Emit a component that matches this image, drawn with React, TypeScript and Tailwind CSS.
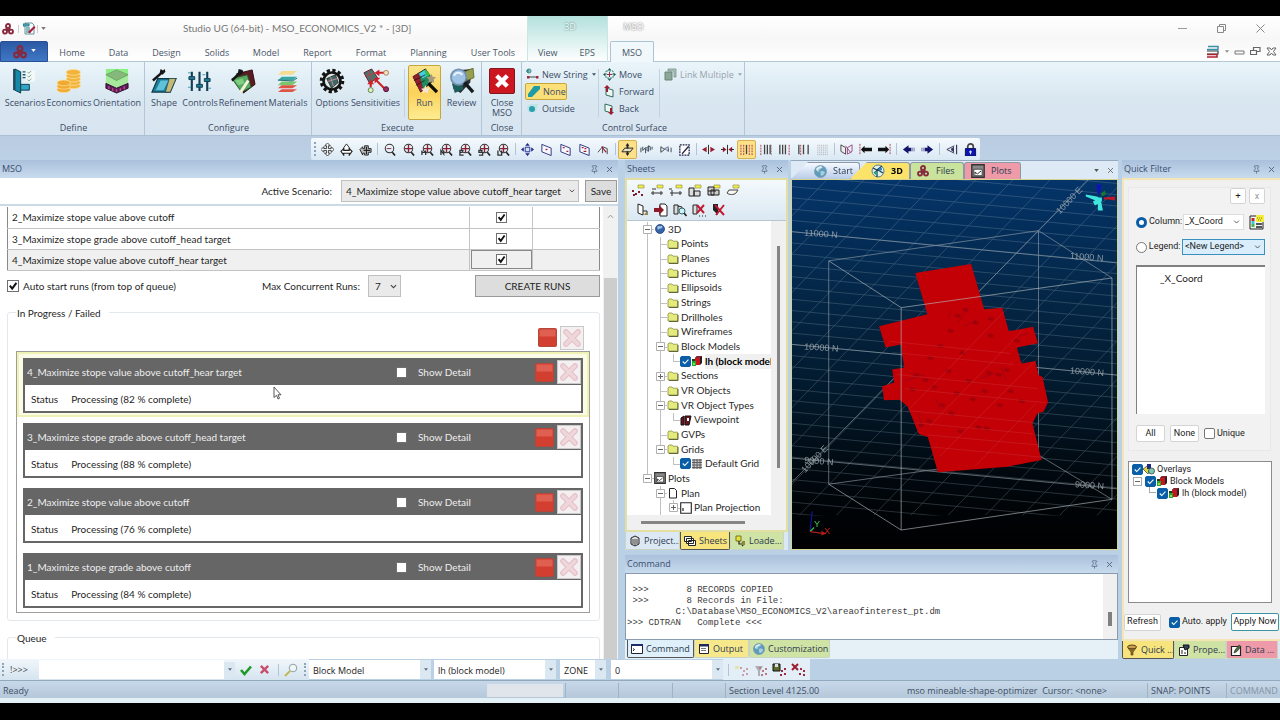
import type { ReactNode } from "react";
import { Pin, X } from "lucide-react";

/* ---------- shared controls ---------- */

function Caret({ className = "" }: { className?: string }) {
  return (
    <svg viewBox="0 0 6 4" className={`h-[3px] w-[5px] shrink-0 ${className}`} aria-hidden="true">
      <path d="M0 0h6L3 4z" fill="currentColor" />
    </svg>
  );
}

function Chevron({ className = "" }: { className?: string }) {
  return (
    <svg viewBox="0 0 8 5" className={`pointer-events-none absolute ${className}`} aria-hidden="true">
      <path d="M1 .8l3 3 3-3" fill="none" stroke="currentColor" strokeWidth="1.2" />
    </svg>
  );
}

function Tick({ label, checked = false, blue = false, className = "" }: { label: string; checked?: boolean; blue?: boolean; className?: string }) {
  return (
    <span className={`relative inline-block shrink-0 ${className}`}>
      <input
        type="checkbox"
        aria-label={label}
        defaultChecked={checked}
        className={
          blue
            ? "peer block h-full w-full appearance-none rounded-[2px] border border-[#777] bg-white checked:border-[#0a5ea8] checked:bg-[#0a5ea8]"
            : "peer block h-full w-full appearance-none border border-[#707070] bg-white"
        }
      />
      <svg viewBox="0 0 12 12" className="pointer-events-none absolute inset-0 hidden h-full w-full peer-checked:block" aria-hidden="true">
        <path d={blue ? "M3 6l2.200 2.200L9.200 4" : "M2.800 5.600l2.400 3L9.400 2.800"} fill="none" stroke={blue ? "#fff" : "#111"} strokeWidth={blue ? "1.2" : "2"} />
      </svg>
    </span>
  );
}

function PanelHead({ title }: { title: string }) {
  return (
    <header className="flex h-[18px] shrink-0 items-center bg-gradient-to-b from-[#aac1dc] to-[#c8dbee] pr-1 pl-[2px] text-[#3b4f6e]">
      <h2 className="flex-1 font-['Open_Sans',sans-serif] text-[9px]">{title}</h2>
      <button aria-label={`Pin ${title}`} className="mr-[6px] opacity-80"><Pin size={9} strokeWidth={2} /></button>
      <button aria-label={`Close ${title}`} className="opacity-80"><X size={9} strokeWidth={2.5} /></button>
    </header>
  );
}

/* ---------- small drawings ---------- */

function AppLogo({ className = "h-3 w-3" }: { className?: string }) {
  return (
    <svg viewBox="0 0 12 12" className={className} fill="none" stroke="#862a3e" strokeWidth="1.9" aria-hidden="true">
      <circle cx="6" cy="3" r="2" />
      <circle cx="3" cy="8.600" r="2" />
      <circle cx="9" cy="8.600" r="2" />
      <path d="M4 4.500L3 7l3 1.500L9 7 8 4.500 6 6z" fill="#862a3e" stroke="none" />
    </svg>
  );
}

function Globe({ className = "h-3 w-3" }: { className?: string }) {
  return (
    <svg viewBox="0 0 12 12" className={className} aria-hidden="true">
      <circle cx="6" cy="6" r="5.600" fill="#5d9cbd" />
      <path d="M2 3c2-2 4-2 6-1-1 2-3 1-3 3s-2 1-3 0zM6 6c2-1 4 0 4 1s-2 3-3 3-1-2-1-4z" fill="#a9cfda" />
      <path d="M2.500 4.500c1-2 3-3 5-2.500" stroke="#e3f2f6" strokeWidth="1.200" fill="none" />
      <circle cx="6" cy="6" r="5.600" fill="none" stroke="#7d96a6" strokeWidth=".6" />
    </svg>
  );
}

function Sphere3D() {
  return (
    <svg viewBox="0 0 14 14" className="h-[14px] w-[14px]" aria-hidden="true">
      <circle cx="7" cy="7" r="6" fill="#dff0ef" stroke="#5a7f8c" />
      <path d="M2 4l4 2 5-4M3 9l4-3 5 3M6 6v7" stroke="#183f55" strokeWidth="1.3" fill="none" />
      <circle cx="5" cy="9" r="1.800" fill="#3aa27a" />
      <circle cx="9.500" cy="5" r="1.600" fill="#2e7fc0" />
    </svg>
  );
}

function PlotIcon({ className = "h-3 w-3" }: { className?: string }) {
  return (
    <svg viewBox="0 0 12 12" className={className} aria-hidden="true">
      <path d="M.7.7h10.600v10.600H.7z" fill="#888" stroke="#333" strokeWidth="1.200" />
      <path d="M2.500 4.500h7v5.500h-7z" fill="#fff" stroke="#222" strokeWidth=".6" />
      <path d="M3.500 9V7l2 1.500L8.600 6" stroke="#222" fill="none" strokeWidth=".8" />
    </svg>
  );
}

function Folder() {
  return (
    <svg viewBox="0 0 12 12" className="h-3 w-3" aria-hidden="true">
      <path d="M1 3l1-1h3l1 1.200h4.600V10H1z" fill="#e4ea7c" stroke="#8a9048" strokeWidth=".8" />
      <path d="M11 4v6.500H2" stroke="#55592c" fill="none" strokeWidth=".9" />
    </svg>
  );
}

function BlockModelIcon() {
  return (
    <svg viewBox="0 0 12 12" className="h-3 w-3 shrink-0" aria-hidden="true">
      <path d="M4 3l2-2h5v7l-2 2H4z" fill="#222" />
      <path d="M4 3h5v7H4z" fill="#c8141e" />
      <path d="M4 3l2-2h5L9 3z" fill="#8c2028" />
      <path d="M1 4h3v2H1z" fill="#14401c" />
      <path d="M1 6h4v5H1z" fill="#26a62e" />
      <path d="M2 8h2v2H2z" fill="#8be04a" />
    </svg>
  );
}

function WorldDot() {
  return (
    <svg viewBox="0 0 12 12" className="h-3 w-3" aria-hidden="true">
      <circle cx="6" cy="6" r="4.500" fill="#3564a8" />
      <path d="M3 4c2-2 3 0 4-1s2 1 1 2-3 0-4 2" fill="#9fc2e8" />
      <circle cx="6" cy="6" r="4.500" fill="none" stroke="#1c3764" strokeWidth=".7" />
    </svg>
  );
}

function StopSquare() {
  return (
    <svg viewBox="0 0 19 19" className="h-[19px] w-[19px]" aria-hidden="true">
      <rect x=".5" y=".5" width="18" height="18" rx="1" fill="#d23f30" stroke="#b4473c" />
      <rect x="1.500" y="1.500" width="16" height="7" fill="#e2685a" opacity=".8" />
    </svg>
  );
}

function FadedX() {
  return (
    <svg viewBox="0 0 20 20" className="h-5 w-5" aria-hidden="true">
      <path d="M4 4l12 12M16 4L4 16" stroke="#e3bdc4" strokeWidth="5.500" strokeLinecap="round" />
      <path d="M4 4l12 12M16 4L4 16" stroke="#efd6da" strokeWidth="3.500" strokeLinecap="round" />
    </svg>
  );
}

/* ---------- title bar and ribbon tabs ---------- */

const mainTabs: [string, string][] = [
  ["Home", "w-12"],
  ["Data", "w-[45px]"],
  ["Design", "w-[51px]"],
  ["Solids", "w-[50px]"],
  ["Model", "w-12"],
  ["Report", "w-[55px]"],
  ["Format", "w-[52px]"],
  ["Planning", "w-[63px]"],
  ["User Tools", "w-[66px]"],
];

function TitleBar() {
  return (
    <header className="flex h-[46px] shrink-0 bg-gradient-to-b from-white via-[#f7f7f7] to-white font-['Open_Sans',sans-serif] text-[9px] text-[#4a5568] shadow-[inset_0_-1px_0_#b4c8d6]">
      <div className="flex w-[527px] shrink-0 flex-col">
        <div className="flex h-[25px] items-center">
          <AppLogo className="ml-[2px] h-3 w-3" />
          <span className="mx-1 h-2 w-px bg-[#ccc]" />
          <svg viewBox="0 0 13 13" className="h-[13px] w-[13px]" aria-hidden="true">
            <path d="M2 1h7l2 2v9H2z" fill="#f6fbfb" stroke="#3e7c86" strokeWidth=".8" />
            <path d="M0 2h6v2H0zM3 6h4M3 8h4M3 10h5" stroke="#23788a" strokeWidth="1" fill="#5fb6c4" />
            <path d="M5 10l6-6 1.500 1.500-6 6z" fill="#b01c38" />
          </svg>
          <span className="ml-px h-2 w-px bg-[#ccc]" />
          <Caret className="ml-[3px] text-[#777]" />
          <h1 className="flex-1 pl-[137px] font-['Lato',sans-serif] text-[10px] text-[#777]">Studio UG (64-bit) - MSO_ECONOMICS_V2 * - [3D]</h1>
        </div>
        <nav className="flex h-[21px] items-stretch">
          <button aria-label="Application menu" className="flex w-12 items-center justify-center gap-1 rounded-t-[2px] border border-[#2a4f94] bg-gradient-to-b from-[#2c59a4] to-[#3f78c6] text-white">
            <AppLogo className="h-[14px] w-[14px]" />
            <Caret className="mb-[2px]" />
          </button>
          {mainTabs.map(([t, w]) => (
            <button key={t} className={`pt-[2px] ${w}`}>{t}</button>
          ))}
        </nav>
      </div>
      <div className="flex w-[81px] shrink-0 flex-col border-x border-[#c9e6e4] bg-gradient-to-b from-[#b3e0dc] via-[#d9f0ee] to-white shadow-[inset_0_-1px_0_#b4c8d6]">
        <p className="h-[25px] pt-1 pl-[5px] text-center text-[#f2fbfa] [text-shadow:0_0_2px_#3f6663]">3D</p>
        <nav className="flex h-[21px]">
          <button className="flex-1 pt-[2px]">View</button>
          <button className="flex-1 pt-[2px]">EPS</button>
        </nav>
      </div>
      <div className="flex w-[46px] shrink-0 flex-col">
        <p className="h-[25px] pt-1 pl-[5px] text-center text-white [text-shadow:0_0_2px_#444]">MSO</p>
        <nav className="flex h-[21px]">
          <button className="ml-[2px] flex-1 rounded-t-[2px] border border-b-0 border-[#a9c4d4] bg-[#f1f8fb] pt-px">MSO</button>
        </nav>
      </div>
      <div className="flex flex-1 flex-col items-end text-[#888]">
        <div className="flex h-[25px] items-center gap-[30px] pr-[15px]">
          <button aria-label="Minimize"><svg viewBox="0 0 9 9" className="h-[9px] w-[9px]"><path d="M0 4.500h9" stroke="#999" /></svg></button>
          <button aria-label="Restore"><svg viewBox="0 0 9 9" className="h-[9px] w-[9px]"><path d="M.5 2.500h6v6h-6zM2.500 2V.5h6v6H7" fill="none" stroke="#888" /></svg></button>
          <button aria-label="Close"><svg viewBox="0 0 9 9" className="h-[9px] w-[9px]"><path d="M.5.5l8 8M8.500.5l-8 8" fill="none" stroke="#888" /></svg></button>
        </div>
        <div className="flex h-5 items-center gap-[5px] pr-[3px]">
          <button aria-label="Style" className="flex items-center gap-[5px]">
            <svg viewBox="0 0 14 13" className="h-[13px] w-[14px]">
              <path d="M2 1.500h10v3H1" fill="none" stroke="#3e8fa6" strokeWidth="1.500" />
              <path d="M1 6h11v3H1" fill="none" stroke="#2e4450" strokeWidth="1.200" />
              <path d="M1 9.500h10v2.500H1" fill="none" stroke="#b02030" strokeWidth="1.500" />
            </svg>
            <Caret className="!w-1" />
          </button>
          <button aria-label="Minimize document"><svg viewBox="0 0 11 11" className="h-[11px] w-[11px]"><path d="M1 5h9v3H1z" fill="none" stroke="#777" /></svg></button>
          <button aria-label="Restore document"><svg viewBox="0 0 11 11" className="h-[11px] w-[11px]"><path d="M.5 4.500h6v4h-6zM3.500 4V1.500h6.500v4H7" fill="none" stroke="#666" strokeWidth="1.200" /></svg></button>
          <button aria-label="Close document"><svg viewBox="0 0 11 11" className="h-[11px] w-[11px]"><path d="M1 2h3l1.500 2L7 2h3L7.500 5.500 10 9H7L5.500 7 4 9H1l2.500-3.500z" fill="none" stroke="#666" /></svg></button>
        </div>
      </div>
    </header>
  );
}

/* ---------- ribbon ---------- */

const ScenariosIcon = (
  <>
    <path d="M14 2h10v12H14z" fill="#f4f8f8" />
    <path d="M11 4h3M11 7h3M11 10h3" stroke="#1d5878" strokeWidth="1.500" />
    <path d="M16 4l1.500 1.500L20 3M16 8l1.500 1.500L20 7M16 12l1.500 1.500L20 11" stroke="#6fae8c" fill="none" />
    <path d="M3 1l6 3v22l-6-3z" fill="#1789a8" stroke="#0d3c50" />
    <path d="M9 17h9v6H9z" fill="#31a5c6" stroke="#0d3c50" />
    <path d="M2 1v22" stroke="#0b2c3c" strokeWidth="1.500" />
  </>
);
const EconomicsIcon = (
  <>
    {[0, 3.5, 7, 10.5, 14].map((d) => <ellipse key={d} cx="18" cy={18.5 - d} rx="7.500" ry="3" fill="#f3b43c" stroke="#fbdf9a" strokeWidth=".8" />)}
    {[0, 3.5, 7].map((d) => <ellipse key={d} cx="8" cy={22.5 - d} rx="7" ry="3" fill="#f0aa30" stroke="#fbdf9a" strokeWidth=".8" />)}
  </>
);
const OrientationIcon = (
  <>
    <path d="M2 1h23v16H2z" fill="#8dee84" />
    <path d="M2 7l11-5 12 5-12 6z" fill="#86b87c" stroke="#5f8a58" strokeWidth=".6" />
    <path d="M2 8l11 6 12-6v8l-12 5-11-5z" fill="#a8e89c" />
    <path d="M2 16l11 5 12-5v5l-12 5-11-5z" fill="#5a1c5e" stroke="#2c0f28" />
    <path d="M5 19v3M9 21v3M13 22v3M17 21v3M21 19v3" stroke="#c8457c" strokeWidth="1.500" />
  </>
);
const ShapeIcon = (
  <>
    <path d="M7 11h19l-6 14H1z" fill="#1c7f9c" stroke="#0e3644" strokeWidth="1.200" />
    <path d="M10 13h8l-5 10H5z" fill="#60c2d8" />
    <path d="M19 11h7l-6 14h-5z" fill="#c8ba74" stroke="#0e3644" strokeWidth=".6" />
    <path d="M2 13L11 5" stroke="#161616" strokeWidth="2.600" />
    <path d="M9 5l1-4 2.500 1.500L14 1l1 3-3 3z" fill="#161616" />
  </>
);
const ControlsIcon = (
  <>
    <path d="M5 4v20M13 4v20M21 4v20" stroke="#123f52" strokeWidth="2.200" />
    <path d="M2 9h6v3H2zM10 17h6v3h-6zM18 11h6v3h-6z" fill="#1e7d94" stroke="#123f52" />
    <path d="M1 5h3M1 20h3M22 21h3M16 7h3" stroke="#3f9cae" />
  </>
);
const RefinementIcon = (
  <>
    <path d="M7 6l16-4 3 15-12 9z" fill="#5e1a22" stroke="#2a0d10" />
    <path d="M2 11l16-4 4 13-10 5z" fill="#58a860" stroke="#22552a" />
    <path d="M5 13l8-2 2 5-6 2z" fill="#7fcf82" />
    <path d="M11 25l8-12" stroke="#f1f5dc" strokeWidth="3" />
    <path d="M2 13l8-8" stroke="#161616" strokeWidth="2.600" />
    <path d="M8 6l1-5 4 1 1 3-4 3z" fill="#161616" />
  </>
);
const MaterialsIcon = (
  <>
    <path d="M7 3h16l-5 4H3z" fill="#f5dc90" />
    <path d="M7 9h16l-5 4H3z" fill="#3aa6a2" />
    <path d="M7 14h16l-5 4H3z" fill="#7cc56c" />
    <path d="M7 18h16l-5 3H3zM7 22h16l-5 3H3z" fill="#e05244" />
    <path d="M3 12.500l15 1 5-3" stroke="#1e6f74" fill="none" />
  </>
);
const OptionsIcon = (
  <>
    <circle cx="13.500" cy="13.500" r="11" fill="none" stroke="#141414" strokeWidth="3.500" strokeDasharray="3.300 2.460" />
    <circle cx="13.500" cy="13.500" r="8.800" fill="#dfe9e8" stroke="#141414" strokeWidth="2.800" />
    <path d="M8 11l9-4 3 8-7 6z" fill="#3d6a66" stroke="#111" strokeWidth=".7" />
    <path d="M12 9l3 10M9 14l10-3" stroke="#c88a94" />
  </>
);
const SensitivitiesIcon = (
  <>
    <path d="M1 5l8-4 6 9-8 6z" fill="#48766c" stroke="#661c26" />
    <path d="M5 3l5 10M2 9l10-4" stroke="#c83848" />
    <path d="M22 5h-7M8 20v-6M22 21l-9-9" stroke="#d0202c" strokeWidth="2.200" />
    <path d="M17 1.500v7l-5-3.500zM4.500 17L8 12l3.500 5zM12 16v-6h6z" fill="#d0202c" />
    <circle cx="24" cy="5" r="2.500" fill="#f0e6cc" stroke="#b07c4c" />
    <circle cx="8" cy="23" r="2.600" fill="#ecebb8" stroke="#4c8c5c" />
    <circle cx="24" cy="22" r="2.600" fill="#a02c60" stroke="#501430" />
  </>
);
const RunIcon = (
  <>
    <path d="M1 9l13-8 8 12-13 12z" fill="#1f8a5e" stroke="#2c1010" />
    <path d="M1 9l6-4 5 18-3 2z" fill="#8f1f2c" />
    <path d="M7 6l6-4 3 6-5 3z" fill="#42d0e0" />
    <path d="M14 1l5 6-3 2-3-6z" fill="#35c048" />
    <path d="M2 13l12-6M4 18l9-5" stroke="#2c1010" strokeWidth=".8" />
    <path d="M20 6l1.500 3 3.500.5-2.500 2.500.5 3.500-3-1.500-3 1.500.5-3.500-2.500-2.500 3.500-.5z" fill="#a8987c" />
    <path d="M17 16l9 9" stroke="#0d0d0d" strokeWidth="3.500" />
    <path d="M14 18l1.500 3 3.500.5-2.500 2 .5 3-3-1.500-3 1.500.5-3-2-2 3-.5z" fill="#efe7cf" />
  </>
);
const ReviewIcon = (
  <>
    <path d="M12 2l12-1-2 14-10 11-8-5z" fill="#2d2a34" />
    <path d="M16 4l9-4 1 10-7 3z" fill="#96a04c" stroke="#4c5420" strokeWidth=".7" />
    <path d="M3 16l10-2 2 8-9 4z" fill="#1c5e5c" />
    <circle cx="10" cy="9.500" r="8" fill="#9ec3e4" stroke="#7390ae" strokeWidth="1.800" />
    <path d="M5 8c2-4 6-4 9-1" stroke="#e8f4fc" strokeWidth="2" fill="none" />
    <path d="M16 15l9 10" stroke="#141c20" strokeWidth="3.500" />
  </>
);
const CloseIcon = (
  <>
    <rect x=".5" y=".5" width="26" height="26" rx="1.500" fill="#cc1620" stroke="#7c1018" />
    <path d="M8 8l11 11M19 8L8 19" stroke="#fff" strokeWidth="4.500" />
  </>
);

function BigButton({ label, icon, w, active = false }: { label: string; icon: ReactNode; w: string; active?: boolean }) {
  return (
    <button className={`flex h-[55px] flex-col items-center whitespace-nowrap pt-[2px] ${w} ${active ? "rounded-[2px] border border-[#c9a63c] bg-gradient-to-b from-[#fbe58c] via-[#fbd25a] to-[#fdec90]" : "border border-transparent"}`}>
      <svg viewBox="0 0 27 27" className="h-[26px] w-[26px] shrink-0" aria-hidden="true">{icon}</svg>
      <span className="mt-1 text-center leading-[10px] whitespace-pre-line">{label}</span>
    </button>
  );
}

function Group({ title, w, children }: { title: string; w: string; children: ReactNode }) {
  return (
    <section className={`flex shrink-0 flex-col border-r border-[#b3c5d6] pt-[3px] ${w}`}>
      <div className="flex flex-1">{children}</div>
      <h3 className="h-[14px] text-center text-[9px] leading-[13px]">{title}</h3>
    </section>
  );
}

function SmallButton({ label, icon, active = false, menu = false, muted = false }: { label: string; icon: ReactNode; active?: boolean; menu?: boolean; muted?: boolean }) {
  return (
    <button disabled={muted} className={`flex h-[17px] items-center gap-[3px] whitespace-nowrap px-px ${active ? "w-[42px] rounded-[2px] border border-[#c9a63c] bg-[#fbdf78]" : ""} ${muted ? "text-[#98a2ad]" : ""}`}>
      <svg viewBox="0 0 13 13" className="h-[13px] w-[13px] shrink-0" aria-hidden="true">{icon}</svg>
      {label}
      {menu && <Caret className="ml-px !w-1" />}
    </button>
  );
}

function Ribbon() {
  const vr = <span className="mx-[3px] my-1 w-px shrink-0 bg-[#c3d2e0]" />;
  return (
    <div className="flex h-[74px] shrink-0 border-b border-[#a9bfd3] bg-gradient-to-b from-[#eaf5fa] via-[#d9e7f1] to-[#d8e5f0] font-['Open_Sans',sans-serif] text-[9px] text-[#3b4b66]">
      <Group title="Define" w="w-[145px] pl-[3px]">
        <BigButton label="Scenarios" icon={ScenariosIcon} w="w-11" />
        <BigButton label="Economics" icon={EconomicsIcon} w="w-11" />
        <BigButton label="Orientation" icon={OrientationIcon} w="w-[52px]" />
      </Group>
      <Group title="Configure" w="w-[167px] pl-px">
        <BigButton label="Shape" icon={ShapeIcon} w="w-9" />
        <BigButton label="Controls" icon={ControlsIcon} w="w-9" />
        <BigButton label="Refinement" icon={RefinementIcon} w="w-[50px]" />
        <BigButton label="Materials" icon={MaterialsIcon} w="w-10" />
      </Group>
      <Group title="Execute" w="w-[170px] pl-[2px]">
        <BigButton label="Options" icon={OptionsIcon} w="w-9 shrink-0" />
        <BigButton label="Sensitivities" icon={SensitivitiesIcon} w="w-[51px] shrink-0" />
        {vr}
        <BigButton label="Run" icon={RunIcon} w="w-[33px] shrink-0" active />
        <BigButton label="Review" icon={ReviewIcon} w="flex-1 pl-px" />
      </Group>
      <Group title="Close" w="w-[40px] pl-px">
        <BigButton label={"Close\nMSO"} icon={CloseIcon} w="w-[38px]" />
      </Group>
      <Group title="Control Surface" w="w-[223px] pl-[3px]">
        <div className="flex w-[70px] flex-col items-start pt-px">
          <SmallButton label="New String" menu icon={<><circle cx="3" cy="3" r="2" fill="none" stroke="#2c8080" /><path d="M2 9h9" stroke="#444" /><path d="M1 8h2.500v2.500H1zM10 8h2.500v2.500H10z" fill="#a0283c" /><path d="M2 1v4M0 3h4" stroke="#2c8080" /></>} />
          <SmallButton label="None" active icon={<path d="M1 12L1 9 7 1h6v3L5 12z" fill="#1f9ca4" />} />
          <SmallButton label="Outside" icon={<><path d="M1 5l3-3h8l-2 8H2z" fill="#bfe2e6" /><circle cx="6" cy="7" r="3" fill="#28a0b0" /></>} />
        </div>
        {vr}
        <div className="flex w-[54px] flex-col items-start pt-px">
          <SmallButton label="Move" icon={<><path d="M6.500 0l2 2.500h-4zM6.500 13l2-2.500h-4zM0 6.500L2.500 4.500v4zM13 6.500l-2.500-2v4z" fill="#1d5e54" /><path d="M3 3h7v7H3z" fill="none" stroke="#3c8c7c" strokeDasharray="2 1" /><path d="M6.500 4v5M4 6.500h5" stroke="#a0283c" /></>} />
          <SmallButton label="Forward" icon={<><path d="M3 3l7 2v7l-7-2z" fill="#eef6f2" stroke="#2d6c60" /><path d="M4 0l3 3H5v4H3V3H1z" fill="#9c1c30" /></>} />
          <SmallButton label="Back" icon={<><path d="M2 2l7 2v7l-7-2z" fill="#eef6f2" stroke="#2d6c60" /><path d="M8 13l3-3H9V6H7v4H5z" fill="#9c1c30" /></>} />
        </div>
        {vr}
        <div className="flex flex-col items-start pt-px">
          <SmallButton label="Link Multiple" menu muted icon={<><path d="M1 4h7v8H1z" fill="#8aa79a" stroke="#6a8478" /><path d="M4 1h8v8h-2V3H4z" fill="#b3c8be" stroke="#6a8478" strokeWidth=".7" /></>} />
        </div>
      </Group>
    </div>
  );
}

/* ---------- view toolbar ---------- */

const lens = (extra: ReactNode) => (
  <>
    <circle cx="7" cy="6" r="4.600" fill="none" stroke="#333" strokeWidth="1.100" />
    <path d="M10 10l3 3.500" stroke="#222" strokeWidth="1.800" />
    {extra}
  </>
);
const cross = <path d="M7 2v8M3 6h8" stroke="#8c1e32" strokeWidth="1.500" />;
const plane = (extra: ReactNode) => (
  <>
    <path d="M2 1.500l10 4v8l-10-4z" fill="#f8f8ff" stroke="#2b2b7c" />
    {extra}
  </>
);
const corner = (d: string) => <path d={d} stroke="#333" strokeWidth="1.400" fill="none" />;
const bars = (a: string, b: string) => (
  <>
    <path d={a} stroke="#444" strokeWidth="1.400" fill="none" />
    <path d={b} stroke="#b03448" fill="none" strokeDasharray="2 1" />
  </>
);

type Tool = { name: string; art: ReactNode; on?: boolean } | "|";
const viewTools: Tool[] = [
  { name: "Pan", art: <><path d="M7 0l3 3H8v3h3V4l3 3-3 3V8H8v3h2l-3 3-3-3h2V8H3v2L0 7l3-3v2h3V3H4z" fill="#fff" stroke="#222" strokeWidth=".9" /></> },
  { name: "Rotate", art: <><path d="M4 5l3-4 3 4v3H4z" fill="#fff" stroke="#222" /><path d="M1 9l3-3v2h6V6l3 3-3 4v-2H4v2z" fill="#fff" stroke="#222" strokeWidth="1.200" /></> },
  { name: "Zoom extents", art: <><path d="M1 7l3-3v2h2V3h4v3h3v4h-3v3H6v-2H4v2z" fill="#bbb" stroke="#222" /><path d="M8 4v8M5 8h7" stroke="#222" strokeWidth="1.200" /></> },
  "|",
  { name: "Zoom", art: lens(<path d="M4 6h5" stroke="#8c1e32" />) },
  { name: "Zoom all", art: lens(cross) },
  { name: "Zoom data", art: lens(<>{cross}{corner("M1 8v5M1 10h4M5 8v5")}</>) },
  { name: "Zoom plan", art: lens(<>{cross}{corner("M1 13V8l3 4V8")}</>) },
  { name: "Zoom east", art: lens(<>{cross}{corner("M5 8H1v5h4M1 10h3")}</>) },
  { name: "Zoom section", art: lens(<>{cross}{corner("M5 8H1v2h4v3H1")}</>) },
  { name: "Zoom window", art: lens(<>{cross}{corner("M1 8v5h4V8")}</>) },
  "|",
  { name: "Centre", art: <><path d="M7 0l2.500 3h-5zM7 14l2.500-3h-5zM0 7l3-2.500v5zM14 7l-3-2.500v5z" fill="#1c2888" /><path d="M4.500 4.500h5v5h-5z" fill="#cfe0f2" stroke="#1c2888" /></> },
  { name: "Section", art: plane(<path d="M6 7h2" stroke="#a02038" strokeWidth="1.500" />) },
  { name: "Section by two points", art: plane(<path d="M4 5h2M8 9h2" stroke="#a02038" strokeWidth="1.500" />) },
  { name: "Section by three points", art: plane(<path d="M4 5h2M7 6h2M6 9h3" stroke="#a02038" strokeWidth="1.500" />) },
  { name: "Align", art: <><path d="M1 10l5-6v7M6 4l5 2v6" stroke="#444" fill="none" /><path d="M5 4l5 6" stroke="#a02038" strokeWidth="1.300" /></> },
  "|",
  { name: "Toggle plane", on: true, art: <><path d="M4 5.500h9l-3 4H1z" fill="#e8e0b8" stroke="#222" /><path d="M7 0l2 3H8v3H6V3H5zM7 14l2-3H8V9H6v2H5z" fill="#222" /></> },
  { name: "Clip front", art: <><path d="M1 5v5M3 4v4l3-3v6M9 3v6M9 3l2 1v4M13 4v3" stroke="#344" fill="none" /><path d="M5 6l4-2v5z" fill="#9fb0d0" stroke="#335" strokeWidth=".6" /></> },
  { name: "Clip back", art: <><path d="M2 4v6l4-3zM13 5v5M10 6v3" stroke="#344" fill="none" /><path d="M6 6l4-2v5z" fill="#c9d4e8" stroke="#335" strokeWidth=".6" /></> },
  { name: "Edit", art: <><path d="M2 2h10v11H2z" fill="#fff" stroke="#224" strokeDasharray="2 1" strokeWidth="1.400" /><path d="M4 11l7-8 1 1-7 8z" fill="#224" /></> },
  "|",
  { name: "Step out", art: <><path d="M0 7l5-3v6zM14 7L9 4v6z" fill="#9c1c30" /><path d="M7 2v10" stroke="#222" /></> },
  { name: "Step in", art: <><path d="M6 7L2 4v6zM8 7l4-3v6z" fill="#9c1c30" /><path d="M7 2v10M0 7h3M11 7h3" stroke="#222" /></> },
  { name: "Both sides", on: true, art: bars("M7 2v10", "M4 2v11M10 2v11M13 2v11M1 2v11") },
  { name: "Left side", art: bars("M6 2v10M9 2v10M12 2v10", "M2 2v11M14 2v11") },
  { name: "Right side", art: bars("M2 2v10M5 2v10M8 2v10", "M12 2v11") },
  { name: "Inside", art: bars("M2 2v10M7 2v10M12 2v10", "M4 2v11") },
  { name: "No clipping", art: <path d="M2 2v11M4 2v11M6 2v11M8 2v11M10 2v11M12 2v11" stroke="#aaa" strokeDasharray="1 1" /> },
  "|",
  { name: "Mirror", art: <><path d="M1 2l5 3v7L1 9z" fill="#eee" stroke="#444" /><path d="M8 12V5l5-3v7zM6 3l6 8" fill="none" stroke="#a0447c" /></> },
  { name: "First", art: <><path d="M2 7l4-4v2h8v4H6v2z" fill="#111" /><path d="M1 1v12" stroke="#b03448" strokeDasharray="2 1" /></> },
  { name: "Last", art: <><path d="M12 7L8 3v2H0v4h8v2z" fill="#111" /><path d="M13 1v12" stroke="#b03448" strokeDasharray="2 1" /></> },
  "|",
  { name: "Previous", art: <><path d="M1 7l6-4.500v2.500h3v4H7v2.500z" fill="#14146c" /><path d="M11 5v4M13 5v4" stroke="#6a6aa8" /></> },
  { name: "Next", art: <><path d="M13 7L7 2.500V5H4v4h3v2.500z" fill="#14146c" /><path d="M3 5v4M1 5v4" stroke="#6a6aa8" /></> },
  "|",
  { name: "Look", art: <><path d="M10 3L2 7l8 4" fill="none" stroke="#335" /><path d="M9 4v6M12.500 2v10" stroke="#335" strokeWidth="1.200" /><circle cx="8" cy="7" r="1.500" fill="#335" /></> },
  { name: "Lock", art: <><path d="M4 6V4c0-4 6-4 6 0v2" fill="none" stroke="#444" strokeWidth="1.800" /><path d="M1.500 6h11v8h-11z" fill="#0c14b4" stroke="#080c50" /><path d="M7 8v4M5.500 9.500h3" stroke="#dde" strokeWidth="1.200" /></> },
];

function Grip() {
  return <span className="mx-[2px] my-1 w-0 shrink-0 self-stretch border-l-2 border-dotted border-[#8fa3b8]" />;
}

function ViewToolbar() {
  return (
    <div className="flex h-6 shrink-0 bg-gradient-to-b from-[#b9cce2] to-[#bdd1e5] pt-[2px]">
      <div className="ml-[24.3%] flex h-[22px] items-center rounded-[2px] bg-gradient-to-b from-[#f5fafd] to-[#d9e8f4] pl-px">
        <Grip />
        {viewTools.map((t, i) =>
          t === "|" ? (
            <span key={i} className="mx-[2px] h-3 w-px bg-[#b4c3d2]" />
          ) : (
            <button key={i} aria-label={t.name} className={`flex h-[19px] w-[19px] items-center justify-center ${t.on ? "rounded-[2px] border border-[#d6b048] bg-[#fce08a]" : ""}`}>
              <svg viewBox="0 0 14 14" className="h-[13px] w-[13px]">{t.art}</svg>
            </button>
          ),
        )}
      </div>
    </div>
  );
}

/* ---------- MSO panel ---------- */

const scenarios = ["2_Maximize stope value above cutoff", "3_Maximize stope grade above cutoff_head target", "4_Maximize stope value above cutoff_hear target"];
const runs: [string, number][] = [
  ["4_Maximize stope value above cutoff_hear target", 82],
  ["3_Maximize stope grade above cutoff_head target", 88],
  ["2_Maximize stope value above cutoff", 76],
  ["1_Maximize stope grade above cutoff", 84],
];

function RunButtons() {
  return (
    <div className="flex items-center gap-[3px]">
      <button aria-label="Stop"><StopSquare /></button>
      <button aria-label="Remove" className="flex h-6 w-6 items-center justify-center border border-[#c9c9c9] bg-[#f4f0f1]"><FadedX /></button>
    </div>
  );
}

function MsoPanel() {
  return (
    <section className="relative flex w-[618px] shrink-0 flex-col bg-white font-['Lato',sans-serif] text-[10px] text-[#1f1f1f]">
      <PanelHead title="MSO" />
      <div className="flex h-[28px] shrink-0 items-center justify-end border-b-2 border-[#ccd9e6] pr-px">
        <label htmlFor="scenario" className="mr-[9px] text-[10px]">Active Scenario:</label>
        <span className="relative mr-[6px]">
          <select id="scenario" className="h-[22px] w-[238px] appearance-none border border-[#c0c0c0] bg-[#eaeaea] pl-1">
            <option>4_Maximize stope value above cutoff_hear target</option>
          </select>
          <Chevron className="top-[9px] right-1 h-1 w-[6px] text-[#444]" />
        </span>
        <button className="h-[22px] w-8 border border-[#9a9a9a] bg-[#dddddd]">Save</button>
      </div>
      <div className="flex min-h-0 flex-1">
        <div className="min-w-0 flex-1 overflow-hidden pt-px pl-[7px]">
          <table className="w-full border-collapse border border-t-0 border-[#8a8a8a]">
            <tbody>
              {scenarios.map((s, i) => (
                <tr key={s} className={`h-[21px] border-b border-[#c4c4c4] ${i === 2 ? "bg-[#f0f0f0]" : ""}`}>
                  <td className="border-r border-[#c4c4c4] pt-px pl-1">{s}</td>
                  <td className={`w-[63px] border-r border-[#c4c4c4] text-center ${i === 2 ? "outline-1 -outline-offset-2 outline-[#888]" : ""}`}>
                    <span className="flex justify-center"><Tick label={`Include ${s}`} checked className="h-[11px] w-[11px]" /></span>
                  </td>
                  <td className="w-[67px]" />
                </tr>
              ))}
            </tbody>
          </table>
          <div className="mt-1 flex h-[23px] items-center">
            <label className="flex w-[255px] items-center gap-1">
              <Tick label="Auto start runs" checked className="h-3 w-3" />
              Auto start runs (from top of queue)
            </label>
            <label htmlFor="maxruns">Max Concurrent Runs:</label>
            <span className="relative ml-2">
              <select id="maxruns" className="h-[22px] w-[33px] appearance-none border border-[#c0c0c0] bg-[#eaeaea] pl-[6px]">
                <option>7</option>
              </select>
              <Chevron className="top-[9px] right-1 h-[5px] w-[7px] text-[#444]" />
            </span>
            <button className="ml-auto h-[22px] w-[125px] border border-[#9a9a9a] bg-[#dddddd]">CREATE RUNS</button>
          </div>
          <fieldset className="mt-2 rounded-[3px] border border-[#e2e8ec] pr-[9px] pb-[7px] pl-2">
            <legend className="px-[1px] pr-2 leading-[14px]">In Progress / Failed</legend>
            <div className="mt-[6px] flex justify-end pr-[6px]"><RunButtons /></div>
            <ul className="mt-px border border-[#9d9d9d]">
              {runs.map(([name, pct], i) => (
                <li key={name} className={`border-2 px-1 pt-1 pb-[2px] ${i === 0 ? "border-[#f0f2b4] bg-[#fbfce8]" : "border-transparent"}`}>
                  <article className="border-2 border-[#666] bg-white">
                    <div className="flex h-[25px] items-center bg-[#666] pl-[2px] text-[#eee]">
                      <h4 className="flex-1">{name}</h4>
                      <label className="flex w-[139px] items-center gap-[11px]">
                        <Tick label={`Show detail for ${name}`} className="h-[11px] w-[11px]" />
                        Show Detail
                      </label>
                      <RunButtons />
                    </div>
                    <p className="flex h-[26px] items-center gap-[13px] pt-[3px] pl-[6px]"><span>Status</span><span>Processing ({pct} % complete)</span></p>
                  </article>
                </li>
              ))}
            </ul>
          </fieldset>
          <fieldset className="mt-[10px] h-20 rounded-[3px] border border-[#e2e8ec] pl-2">
            <legend className="px-[1px] pr-2 leading-[14px]">Queue</legend>
          </fieldset>
        </div>
        <div className="ml-[3px] flex w-[15px] shrink-0 flex-col bg-[#f1f1f1]">
          <span className="flex h-[72px] justify-center pt-2">
            <svg viewBox="0 0 8 5" className="h-[5px] w-[7px]" aria-hidden="true"><path d="M1 4l3-3 3 3" fill="none" stroke="#888" /></svg>
          </span>
          <span className="mx-px flex-1 bg-[#cdcdcd]" />
        </div>
      </div>
      <svg viewBox="0 0 9 14" className="absolute top-[226px] left-[273px] h-[14px] w-[9px]" aria-hidden="true">
        <path d="M1 1v10.500l2.500-2.200L5 13l1.500-.7L5 8.800h3z" fill="#fff" stroke="#444" strokeWidth=".9" />
      </svg>
    </section>
  );
}

/* ---------- Sheets panel ---------- */

type Node = { t: string; lv: number; icon: ReactNode; exp?: "-" | "+"; check?: boolean; bold?: boolean; last?: boolean; rail0?: boolean; rail1?: boolean };
const folder = <Folder />;
const tree: Node[] = [
  { t: "3D", lv: 0, icon: <WorldDot />, exp: "-" },
  ...["Points", "Planes", "Pictures", "Ellipsoids", "Strings", "Drillholes", "Wireframes"].map((t) => ({ t, lv: 1, icon: folder, rail0: true })),
  { t: "Block Models", lv: 1, icon: folder, exp: "-", rail0: true },
  { t: "lh (block model)", lv: 2, icon: <BlockModelIcon />, check: true, bold: true, last: true, rail0: true, rail1: true },
  { t: "Sections", lv: 1, icon: folder, exp: "+", rail0: true },
  { t: "VR Objects", lv: 1, icon: folder, rail0: true },
  { t: "VR Object Types", lv: 1, icon: folder, exp: "-", rail0: true },
  { t: "Viewpoint", lv: 2, icon: <svg viewBox="0 0 12 12" className="h-3 w-3"><path d="M1 4l3-2v9H1zM5 2h6l-2 9H5z" fill="#6c1420" stroke="#111" /><path d="M7 4h2v3H7z" fill="#fff" /></svg>, last: true, rail0: true, rail1: true },
  { t: "GVPs", lv: 1, icon: folder, rail0: true },
  { t: "Grids", lv: 1, icon: folder, exp: "-", last: true, rail0: true },
  { t: "Default Grid", lv: 2, icon: <svg viewBox="0 0 12 12" className="h-3 w-3"><path d="M1 1h10v10H1z" fill="#ccc" /><path d="M1 2h10M1 4.500h10M1 7h10M1 9.500h10M3 1v10M6 1v10M9 1v10" stroke="#555" strokeWidth=".9" /></svg>, check: true, last: true, rail0: true },
  { t: "Plots", lv: 0, icon: <PlotIcon />, exp: "-", last: true },
  { t: "Plan", lv: 1, icon: <svg viewBox="0 0 12 12" className="h-3 w-3"><path d="M2.500 1.500h5l2 2v7.500h-7z" fill="#fff" stroke="#222" /></svg>, exp: "-" },
  { t: "Plan Projection", lv: 2, icon: <svg viewBox="0 0 12 12" className="h-3 w-3"><path d="M.7.7h10.600v10.600H.7z" fill="#fff" stroke="#222" strokeWidth="1.100" /><path d="M3 6v3" stroke="#222" strokeWidth="1.200" /></svg>, exp: "+", last: true, rail1: true },
];

function Rail({ on = false }: { on?: boolean }) {
  return (
    <span className="flex w-[13px] shrink-0 self-stretch pl-[6px]">
      {on && <span className="w-px bg-[#c0c0c0]" />}
    </span>
  );
}

function Branch({ n }: { n: Node }) {
  return (
    <span className="relative h-full w-[13px] shrink-0">
      <span className={`absolute left-[6px] w-px bg-[#c0c0c0] ${n.last ? "top-0 h-1/2" : "inset-y-0"}`} />
      <span className="absolute top-1/2 right-0 left-[6px] h-px bg-[#c0c0c0]" />
      {n.exp && (
        <svg viewBox="0 0 9 9" className="absolute top-[3px] left-[2px] h-[9px] w-[9px]" aria-hidden="true">
          <path d="M.5.5h8v8h-8z" fill="#fff" stroke="#b0b0b0" />
          <path d={n.exp === "+" ? "M2 4.500h5M4.500 2v5" : "M2 4.500h5"} stroke="#666" />
        </svg>
      )}
    </span>
  );
}

function SheetsTree() {
  return (
    <ul className="flex h-full flex-col pt-px">
      {tree.map((n) => (
        <li key={n.t} className="flex min-h-0 flex-1 items-center pl-[14px] whitespace-nowrap">
          {n.lv >= 1 && <Rail on={n.rail0} />}
          {n.lv === 2 && <Rail on={n.rail1} />}
          <Branch n={n} />
          {n.check && <Tick label={`Show ${n.t}`} checked blue className="h-[11px] w-[11px]" />}
          <span className="w-3 shrink-0">{n.icon}</span>
          <span className={`ml-[2px] pr-1 ${n.bold ? "bg-[#f0f0f0] font-bold text-black" : ""}`}>{n.t}</span>
        </li>
      ))}
    </ul>
  );
}

const tag = <path d="M7 2h6v3H7z" fill="#f0ee50" stroke="#8a8830" strokeWidth=".6" />;
const sheetTools: { name: string; art: ReactNode }[][] = [
  [
    { name: "New points", art: <>{tag}<path d="M1 8h2M4 11h2M7 9h2M10 12h2M2 12h2" stroke="#7c1c30" strokeWidth="1.800" /></> },
    { name: "New string", art: <>{tag}<path d="M1 10h12M3 8v4M11 8v4M2 6h4" stroke="#333" fill="none" /></> },
    { name: "New strings", art: <>{tag}<path d="M1 10h12M3 7v6M3 6H0M11 8v4" stroke="#333" fill="none" /></> },
    { name: "New wireframe", art: <>{tag}<path d="M1 5h5v8H1zM6 8h6v5H6z" fill="#ddd" stroke="#222" /></> },
    { name: "New block model", art: <>{tag}<path d="M1 4h6v8H1zM4 7h8v5H4zM1 8h8" fill="#ccc" stroke="#222" /></> },
    { name: "New plane", art: <>{tag}<path d="M1 10l2-3h9l-2 3c-2 2-7 2-9 0z" fill="#f8f8f0" stroke="#444" /></> },
  ],
  [
    { name: "Properties", art: <><path d="M3 1l5 2v9l-5-2zM8 8h4v4" fill="#fff" stroke="#222" /><path d="M9 12l2-3 2 3z" fill="#a08838" /></> },
    { name: "Import", art: <><path d="M6 1h5l2 2v10H6z" fill="#fff" stroke="#222" /><path d="M0 5h5V2l5 5-5 5V9H0z" fill="#8c1a28" /></> },
    { name: "Find", art: <><path d="M1 2h4v9H1zM5 3l4 1v7" fill="#ddd" stroke="#222" /><circle cx="9" cy="8" r="3" fill="#cfeff0" stroke="#2c6c6c" /><path d="M11 10l2.500 3" stroke="#222" strokeWidth="1.600" /></> },
    { name: "Remove", art: <><path d="M1 2h4v9H1z" fill="#ddd" stroke="#222" /><path d="M5 2l7 8M12 2l-7 8" stroke="#c01830" strokeWidth="1.900" /><path d="M7 13h1M10 13h1M13 13h1" stroke="#222" /></> },
    { name: "Remove all", art: <><path d="M2 1h5v11L2 7z" fill="#222" /><path d="M4 2l9 10M13 2L5 12" stroke="#c01830" strokeWidth="1.900" /></> },
  ],
];

function DockTab({ label, icon, tone, w, current = false }: { label: string; icon: ReactNode; tone: string; w: string; current?: boolean }) {
  return (
    <button role="tab" aria-selected={current} className={`flex h-[18px] items-center gap-[3px] overflow-hidden rounded-b-[2px] border border-t-0 px-[3px] pt-px font-['Open_Sans',sans-serif] text-[9px] whitespace-nowrap text-[#2c3a50] ${current ? "border-[#555]" : "border-[#c8d4c4]"} ${tone} ${w}`}>
      {icon}
      {label}
    </button>
  );
}

const small = "h-3 w-3 shrink-0";

function SheetsPanel() {
  return (
    <section className="flex w-[163px] shrink-0 flex-col font-['Lato',sans-serif] text-[10px] text-[#2a2a2a]">
      <PanelHead title="Sheets" />
      <div className="flex min-h-0 flex-1 flex-col border-2 border-[#e3dfa0] bg-white">
        <div className="flex h-[41px] shrink-0 flex-col justify-around border-b border-[#b8c6d4] bg-gradient-to-b from-[#f4f9fc] to-[#dbe8f2]">
          {sheetTools.map((row, r) => (
            <div key={r} className={`flex gap-[5px] ${r === 0 ? "pl-1" : "pl-2"}`}>
              {row.map((b) => (
                <button key={b.name} aria-label={b.name}><svg viewBox="0 0 14 14" className="h-[14px] w-[14px]">{b.art}</svg></button>
              ))}
            </div>
          ))}
        </div>
        <div className="flex min-h-0 flex-1">
          <div className="min-w-0 flex-1 overflow-hidden"><SheetsTree /></div>
          <div className="flex w-[15px] shrink-0 justify-center bg-[#f0f0f0] pt-[25px] pb-[47px]"><span className="w-[3px] bg-[#858585]" /></div>
        </div>
        <div className="flex h-[15px] shrink-0 items-center bg-[#f0f0f0] pl-[14px]"><span className="h-[3px] w-[104px] bg-[#858585]" /></div>
      </div>
      <div role="tablist" className="flex shrink-0 bg-[#dbe7f2]">
        <DockTab label="Project..." tone="bg-[#dce9f4]" w="w-[55px]" icon={<svg viewBox="0 0 12 12" className={small}><path d="M2 3l4-2 4 2v6l-4 2-4-2z" fill="#ddd" stroke="#222" /><path d="M4 4v5M6 4v6M8 4v5" stroke="#444" /></svg>} />
        <DockTab label="Sheets" current tone="bg-[#f8e47c]" w="w-[50px]" icon={<svg viewBox="0 0 12 12" className={small}><path d="M.5 1.500h7v5h-7zM2.500 3.500h7v5h-7zM4.500 5.500h7v5h-7z" fill="#fff" stroke="#222" /></svg>} />
        <DockTab label="Loade..." tone="bg-[#cfe3a4]" w="w-[54px]" icon={<svg viewBox="0 0 12 12" className={small}><path d="M2 1h5v5H2z" fill="#e8e23c" stroke="#77721c" /><path d="M5 6v3h3M8 7l2 2-2 2" stroke="#222" fill="none" strokeWidth="1.200" /><path d="M8 6h3v4H8z" fill="#8c8a38" /></svg>} />
      </div>
    </section>
  );
}

/* ---------- 3D view ---------- */

function Scene() {
  const rows: number[] = [];
  for (let k = -9; k < 26; k++) rows.push(232 + k * 11.2);
  const cols: number[] = [];
  for (let k = -10; k < 22; k++) cols.push(763 + k * 37);
  return (
    <svg viewBox="793 180 323 368" preserveAspectRatio="xMidYMid slice" className="block h-full w-full" role="img" aria-label="3D block model view">
      <defs>
        <linearGradient id="sky" x1="0" y1="0" x2="0" y2="1">
          <stop offset="0" stopColor="#05356a" />
          <stop offset=".3" stopColor="#042748" />
          <stop offset=".6" stopColor="#021829" />
          <stop offset=".8" stopColor="#01080e" />
          <stop offset="1" stopColor="#000" />
        </linearGradient>
        <clipPath id="floor"><path d="M793 180h323v334H793z" /></clipPath>
      </defs>
      <path d="M793 180h323v368H793z" fill="url(#sky)" />
      <g clipPath="url(#floor)" stroke="#8fa6b4" strokeWidth=".7" opacity=".38">
        {rows.map((y) => <path key={y} d={`M793 ${y}L1116 ${y + 30.5}`} />)}
        {cols.map((x) => <path key={x} d={`M${x} 514l324 -334`} />)}
      </g>
      <g stroke="#a3adb3" strokeWidth=".8" fill="none" opacity=".7">
        <path d="M793 232l323 31M793 344l323 30.500M793 457l323 30.500M793 481L1088 180" />
        <path d="M829.500 261L1038 231l73 47M829.500 261v222M1038 231v223M829.500 483L1038 454l73 44" />
      </g>
      <path d="M915.500 273L971 264l13 45 18-1.500 6.500 23.500 24-4.500 5 16.500-21 4 4.500 16 14-2.500 3 14 4 2 5.500 25-4.500 9.500-6 1.500-5 10 9 36.500-34 6.500-69 5.500-10-35-9-3-11-27-8-7-15.500.5-2-14 12-3.500-2-13 12-2-3.500-23-15 3-6.500-21 48-12z" fill="#c20006" />
      <g fill="#7c0010" opacity=".4">
        {[[957, 315], [965, 309], [950, 330], [975, 322], [940, 345], [962, 352], [990, 335], [916, 374], [925, 379], [934, 386], [948, 370], [956, 392], [988, 372], [998, 374], [1006, 369], [921, 424], [929, 420], [951, 412], [942, 404], [978, 426], [986, 427], [972, 398], [1010, 390], [1021, 400], [1016, 340], [930, 357], [999, 404], [968, 380], [912, 388], [984, 390], [990, 318], [960, 430]].map(([x, y]) => (
          <path key={`${x}-${y}`} d={`M${x - 3} ${y + 1}l2-3 3 1 2 1-2 3z`} />
        ))}
        <path d="M948 318l3-8M958 322l8-12M964 326l12-6M905 380l20-6M918 412l5 14M980 378l16-6M1000 366l6 14M936 398l4 10M1018 336l10-3" stroke="#5c1030" strokeWidth=".8" />
      </g>
      <g stroke="#e59a9a" strokeWidth=".5" opacity=".28" fill="none">
        <path d="M890 341l120 12M893 352l120 12M897 374l140 14M905 388l140 14M910 410l125 12M916 422l117 11M928 434l110 10M932 446l108 10" />
        <path d="M908 410L1015 300M930 425l92-95M940 455l100-100M975 465l60-62" />
      </g>
      <path d="M829.500 261l72 46.500L1111 278v220l-209.500 30.500L829.500 483M901.500 307.500v221" stroke="#b4bcc0" strokeWidth=".9" fill="none" opacity=".7" />
      <g fill="#a9b1b6" fontFamily="Liberation Sans, sans-serif" fontSize="9" opacity=".8">
        <text x="805" y="236" transform="rotate(4 805 236)">11000 N</text>
        <text x="1069" y="259" transform="rotate(4 1069 259)">11000 N</text>
        <text x="805" y="349" transform="rotate(4 805 349)">10000 N</text>
        <text x="1069" y="373" transform="rotate(4 1069 373)">10000 N</text>
        <text x="805" y="462" transform="rotate(4 805 462)">9000 N</text>
        <text x="1074" y="486" transform="rotate(4 1074 486)">9000 N</text>
        <text x="1059" y="215" transform="rotate(-46 1059 215)">10000 E</text>
        <text x="806" y="472" transform="rotate(-46 806 472)">10000 E</text>
      </g>
      <g>
        <path d="M1095.500 185h5l-1.500 10h-2z" fill="#1014b8" />
        <path d="M1100 194l4-3 1 4-4 2z" fill="#147a2c" />
        <path d="M1103 198l11-1v4l-6-1-5 0z" fill="#c01824" />
        <path d="M1085 195l11 2 2 1-1 4-12-5zM1096 198h5v4h-5zM1097 201h3l2 10h-5zM1092 202l4-2 2 4-4 2z" fill="#3fe6e0" />
      </g>
      <g strokeWidth="1.200" fill="none" fontFamily="Liberation Sans, sans-serif" fontSize="9">
        <path d="M811 530l2-20" stroke="#1212a0" />
        <path d="M811 530l4-4" stroke="#35c045" />
        <path d="M811 530l14 2M822 530l4 2-4 1.500" stroke="#b01c1c" />
        <text x="815" y="526" fill="#3fd050" stroke="none">Y</text>
        <text x="825" y="532" fill="#c02020" stroke="none">X</text>
      </g>
    </svg>
  );
}

function ViewTab({ label, tone, w, icon, slant = false, current = false }: { label: string; tone: string; w: string; icon: ReactNode; slant?: boolean; current?: boolean }) {
  return (
    <button role="tab" aria-selected={current} className={`flex h-[17px] items-center gap-[6px] whitespace-nowrap rounded-t-[3px] border border-b-0 border-[#8c9aa8] ${current ? "font-bold text-black" : ""} ${slant ? "pl-5 [clip-path:polygon(17px_0,100%_0,100%_100%,0_100%)]" : "pl-[6px]"} ${tone} ${w}`}>
      {icon}
      {label}
    </button>
  );
}

function ViewPanel() {
  return (
    <section className="flex min-w-0 flex-1 flex-col">
      <div role="tablist" className="flex h-[19px] shrink-0 items-end border-t border-[#93a9c0] bg-[#dde9f4] font-['Open_Sans',sans-serif] text-[9px] text-[#2c3a50]">
        <ViewTab label="Start" slant tone="bg-gradient-to-b from-[#f4f9ff] to-[#b9cce8]" w="w-[69px]" icon={<Globe className="ml-[2px] h-[13px] w-[13px]" />} />
        <ViewTab label="3D" slant current tone="-ml-[10px] bg-[#fbe36a]" w="w-[60px]" icon={<Sphere3D />} />
        <ViewTab label="Files" tone="bg-[#c9e29c]" w="w-[54px]" icon={<AppLogo className="mr-px h-3 w-3" />} />
        <ViewTab label="Plots" tone="bg-[#ee9aa8]" w="w-[57px]" icon={<PlotIcon className="h-[14px] w-[14px]" />} />
        <span className="flex-1" />
        <button aria-label="Tab list" className="mr-[7px] mb-[7px] text-[#555]"><Caret className="block" /></button>
        <button aria-label="Close view" className="mr-[3px] mb-1 text-[#555]"><X size={9} /></button>
      </div>
      <div className="min-h-0 flex-1 border border-[#d6d48c]"><Scene /></div>
    </section>
  );
}

/* ---------- Command panel ---------- */

function CommandPanel() {
  return (
    <section className="flex h-[104px] shrink-0 flex-col">
      <PanelHead title="Command" />
      <div className="flex min-h-0 flex-1 border border-[#8a9bb0] bg-white">
        <pre className="min-w-0 flex-1 overflow-hidden pt-[11px] pl-px font-['Liberation_Mono',monospace] text-[9px] leading-[11px] text-[#3a3a3a]">
{` >>>       8 RECORDS COPIED
 >>>       8 Records in File:
         C:\\Database\\MSO_ECONOMICS_V2\\areaofinterest_pt.dm
>>> CDTRAN   Complete <<<`}
        </pre>
        <div className="flex w-[14px] justify-center bg-[#f0f0f0] pt-[38px]"><span className="h-[14px] w-1 bg-[#808080]" /></div>
      </div>
      <div role="tablist" className="flex h-[19px] shrink-0 bg-[#e6f0f7] pl-[2px]">
        <DockTab label="Command" current tone="bg-[#dff0fa]" w="w-[67px]" icon={<svg viewBox="0 0 12 12" className={small}><path d="M.5 1.500h11v9H.5z" fill="#fff" stroke="#223" /><path d="M0 1h12v2H0z" fill="#1c2c6c" /><path d="M2 5.500l1.500 1L2 8" stroke="#222" fill="none" /></svg>} />
        <DockTab label="Output" tone="bg-[#f8e88c]" w="w-[55px]" icon={<svg viewBox="0 0 12 12" className={small}><path d="M1.500 1.500h9v9h-9z" fill="#fff" stroke="#223" /><path d="M1 1h10v2.500H1z" fill="#222a5c" /><path d="M3 5.500h5M3 7.500h5" stroke="#777" /></svg>} />
        <DockTab label="Customization" tone="bg-[#cfe3a4]" w="w-[81px]" icon={<Globe className={small} />} />
      </div>
    </section>
  );
}

/* ---------- Quick Filter ---------- */

const qBtn = "rounded-[2px] border border-[#d4d4d4] bg-white";

function QuickFilter() {
  return (
    <section className="flex w-[158px] shrink-0 flex-col font-['Roboto',sans-serif] text-[9px] text-[#1c1c1c]">
      <PanelHead title="Quick Filter" />
      <div className="flex min-h-0 flex-1 flex-col overflow-hidden border-2 border-r-0 border-[#f3e6b4] bg-[#f0f0f0] pr-[5px] pl-1">
        <div className="mt-[7px] mr-1 flex flex-col border border-[#e8e8e8] bg-[#f2f2f2] pr-[5px] pb-2 pl-[7px]">
          <div className="flex justify-end gap-[3px]">
            <button className={`h-4 w-4 leading-[12px] ${qBtn}`}>+</button>
            <button className={`h-4 w-4 leading-[12px] text-[#999] ${qBtn}`}>x</button>
          </div>
          <div className="mt-[10px] flex h-4 items-center">
            <input id="qcol" type="radio" name="qf" defaultChecked className="mr-[2px] h-[11px] w-[11px] appearance-none rounded-full border-[3px] border-[#0a5ea8] bg-white" />
            <label htmlFor="qcol" className="w-[34px]">Column:</label>
            <span className="relative">
              <select aria-label="Column" className="block h-4 w-[61px] appearance-none border border-[#ddd] bg-white pl-px">
                <option>_X_Coord</option>
              </select>
              <Chevron className="top-[6px] right-1 h-1 w-[7px] text-[#555]" />
            </span>
            <button aria-label="Pick values" className="ml-[5px]">
              <svg viewBox="0 0 15 15" className="h-[15px] w-[15px]"><path d="M1 1h13v13H1z" fill="#f4f4f4" stroke="#222" /><path d="M2.500 3h3v3h-3z" fill="#c02828" /><path d="M2.500 6h3v3h-3z" fill="#3cc8d8" /><path d="M2.500 9h3v3h-3z" fill="#48b848" /><path d="M7 9h6M7 12h6" stroke="#222" strokeWidth="1.500" /><path d="M7 0h8v7H7z" fill="#f4ee38" /><path d="M8 3h5M9 5h4" stroke="#7c7820" strokeDasharray="1 1" /></svg>
            </button>
          </div>
          <div className="mt-[9px] flex h-4 items-center">
            <input id="qleg" type="radio" name="qf" className="mr-[2px] h-[11px] w-[11px] appearance-none rounded-full border border-[#777] bg-white" />
            <label htmlFor="qleg" className="w-[34px]">Legend:</label>
            <span className="relative">
              <select aria-label="Legend" className="block h-4 w-[83px] appearance-none border border-[#3a90c0] bg-[#d9eefa] pl-[2px]">
                <option>&lt;New Legend&gt;</option>
              </select>
              <Chevron className="top-[6px] right-1 h-1 w-[7px] text-[#555]" />
            </span>
          </div>
          <ul className="mt-[10px] h-[149px] border-t-2 border-l border-[#808080] bg-white pt-1 pl-[23px] font-['Lato',sans-serif] text-[10px]"><li>_X_Coord</li></ul>
          <div className="mt-[11px] flex items-center">
            <button className={`h-[17px] w-[29px] ${qBtn}`}>All</button>
            <button className={`ml-[5px] h-[17px] w-[29px] ${qBtn}`}>None</button>
            <label className="ml-[5px] flex items-center gap-[2px]"><Tick label="Unique" blue className="h-[11px] w-[11px]" />Unique</label>
          </div>
        </div>
        <ul className="mt-[10px] mr-[3px] h-[142px] border border-[#8c8c8c] bg-white pt-px pl-[3px] leading-3">
          <li className="flex items-center"><Tick label="Overlays" checked blue className="h-[11px] w-[11px]" />
            <svg viewBox="0 0 12 12" className="mr-[2px] h-3 w-3" aria-hidden="true"><path d="M0 6l4-3 3 3-2 5z" fill="#e0d43c" stroke="#222" strokeWidth=".6" /><path d="M4 1h4v5H4z" fill="#1c2c84" /><circle cx="8.500" cy="8" r="3" fill="#7cc8b4" stroke="#233" strokeWidth=".7" /></svg>Overlays</li>
          <li className="flex items-center"><span className="mr-[3px] ml-px flex h-[9px] w-[9px] items-center justify-center border border-[#aaa]"><span className="h-px w-[5px] bg-[#666]" /></span><Tick label="Block Models" checked blue className="h-[11px] w-[11px]" /><BlockModelIcon /><span className="ml-[2px]">Block Models</span></li>
          <li className="flex items-center pl-[17px]"><span className="-mt-[6px] mr-px h-[6px] w-[7px] border-b border-l border-[#aaa]" /><Tick label="lh" checked blue className="h-[11px] w-[11px]" /><BlockModelIcon /><span className="ml-[2px]">lh (block model)</span></li>
        </ul>
        <div className="mt-[10px] -mr-1 -ml-1 flex h-[18px] items-center">
          <button className={`h-[17px] w-[37px] ${qBtn}`}>Refresh</button>
          <label className="ml-2 flex flex-1 items-center gap-[2px] whitespace-nowrap"><Tick label="Auto. apply" checked blue className="h-[11px] w-[11px]" />Auto. apply</label>
          <button className="h-[18px] w-12 rounded-[2px] border border-[#3c94a0] bg-white whitespace-nowrap">Apply Now</button>
        </div>
      </div>
      <div role="tablist" className="flex h-[18px] shrink-0 bg-[#dbe7f2] pr-[2px]">
        <DockTab label="Quick ..." current tone="flex-1 bg-[#f8e47c]" w="" icon={<svg viewBox="0 0 12 12" className={small}><ellipse cx="6" cy="3" rx="4.500" ry="2" fill="#c8a050" stroke="#5c4418" /><path d="M2 4l3 4v3h2V8l3-4c-2 1-6 1-8 0z" fill="#8c6c2c" stroke="#5c4418" strokeWidth=".7" /></svg>} />
        <DockTab label="Prope..." tone="flex-1 bg-[#cfe3a4]" w="" icon={<svg viewBox="0 0 12 12" className={small}><path d="M1.500 3.500h8v8h-8z" fill="#fff" stroke="#222" /><path d="M5 1h6v3L7 6z" fill="#345" stroke="#112" /><path d="M3 7h2M3 9h2M6 9h2" stroke="#222" /></svg>} />
        <DockTab label="Data ..." tone="flex-1 bg-[#ee9aa8]" w="" icon={<svg viewBox="0 0 12 12" className={small}><path d="M1.500 2.500h9v9h-9z" fill="#fff" stroke="#222" strokeWidth="1.200" /><path d="M4 9l1-3 4-5 2 1.500-4 5z" fill="#556b3c" stroke="#222" strokeWidth=".6" /></svg>} />
      </div>
    </section>
  );
}

/* ---------- bottom bars ---------- */

function Combo({ label, value, w }: { label: string; value: string; w: string }) {
  return (
    <span className={`flex h-[19px] shrink-0 ${w}`}>
      <select aria-label={label} className="h-full min-w-0 flex-1 appearance-none bg-white pt-[2px] pl-1">
        <option>{value}</option>
      </select>
      <span className="flex w-[11px] items-center justify-center bg-[#dbe8f2] text-[#5a6e88]"><Caret className="!w-1" /></span>
    </span>
  );
}

function CommandBar() {
  const dots = <path d="M6 5h2M9 8h2M12 6h2M8 12h2M12 11h2" stroke="#a02840" strokeWidth="2" />;
  return (
    <div className="flex h-[22px] shrink-0 items-center border-b border-[#93a9bd] bg-[#bad0e4] font-['Open_Sans',sans-serif] text-[9px] text-[#222]">
      <div className="flex h-full items-center bg-gradient-to-b from-[#f1f7fb] to-[#d5e4f0] pr-px">
        <Grip />
        <label htmlFor="cmd" className="ml-1 w-[29px] text-[#444]">!&gt;&gt;&gt;</label>
        <input id="cmd" type="text" className="h-[19px] w-[185px] bg-white px-1" />
        <button aria-label="Command history" className="flex h-[15px] w-[11px] items-center justify-center bg-[#dbe8f2] text-[#5a6e88]"><Caret className="!w-1" /></button>
        <button aria-label="Accept" className="ml-[5px] w-[14px]"><svg viewBox="0 0 12 12" className="h-3 w-3"><path d="M1 6l3.500 4L11 2.500" fill="none" stroke="#1f9a28" strokeWidth="2.600" /></svg></button>
        <button aria-label="Cancel" className="ml-[5px] w-[14px]"><svg viewBox="0 0 12 12" className="h-[11px] w-[11px]"><path d="M2 2l8 8M10 2l-8 8" fill="none" stroke="#c8506c" strokeWidth="2.600" /></svg></button>
        <span className="mx-[5px] h-3 w-px bg-[#b4c3d2]" />
        <button aria-label="Find command" className="mr-1"><svg viewBox="0 0 14 14" className="h-[14px] w-[14px]"><circle cx="9" cy="5" r="3.800" fill="#eef6f6" stroke="#8fa0a8" /><path d="M6 8l-5 5" stroke="#c0b848" strokeWidth="1.800" /></svg></button>
        <Grip />
      </div>
      <Combo label="Object type" value="Block Model" w="w-[122px]" />
      <Combo label="Object" value="lh (block model)" w="ml-[3px] w-[122px]" />
      <Combo label="Column" value="ZONE" w="ml-1 w-[46px]" />
      <Combo label="Value" value="0" w="ml-[5px] w-[112px]" />
      <div className="flex h-full items-center gap-[5px] bg-[#e4eef6] px-[5px]">
        <span className="h-3 w-px bg-[#b4c3d2]" />
        <button aria-label="Highlight" className="opacity-40"><svg viewBox="0 0 14 14" className="h-[14px] w-[14px]"><path d="M1 3h4v3H1z" fill="#e0dc40" />{dots}</svg></button>
        <button aria-label="Highlight filter" className="opacity-60"><svg viewBox="0 0 14 14" className="h-[14px] w-[14px]"><path d="M2 3h8l-3 5v5H5V8z" fill="#888" />{dots}</svg></button>
        <button aria-label="Save selection"><svg viewBox="0 0 14 14" className="h-[14px] w-[14px]"><path d="M1 1h7v7H1z" fill="#5c6c2c" stroke="#111" /><path d="M3 1h3v3H3z" fill="#dde" /><path d="M9 8h2M12 6h2M8 12h2M12 11h2" stroke="#a02840" strokeWidth="2" /></svg></button>
        <button aria-label="Clear selection"><svg viewBox="0 0 14 14" className="h-[14px] w-[14px]"><path d="M1 1l6 6M7 1L1 7" stroke="#9c1c30" strokeWidth="2" /><path d="M9 6h2M12 8h2M8 11h2M12 12h2" stroke="#a02840" strokeWidth="2" /></svg></button>
      </div>
    </div>
  );
}

function StatusBar() {
  const cell = "flex items-center border-l border-[#9fb3c6]";
  return (
    <footer className="shrink-0 border-b-[5px] border-[#e3f0f5] bg-gradient-to-b from-[#c6d8e9] to-[#b5c8da] font-['Open_Sans',sans-serif] text-[9px] text-[#3e4e64]">
      <div className="flex h-[17px] items-stretch pt-[2px] whitespace-nowrap">
        <span className="flex flex-1 items-center pl-[3px]">Ready</span>
        <span className="my-px mr-[2px] w-[76px] bg-[#dfe5eb]" />
        <span className={`${cell} w-[53px]`} />
        <span className={`${cell} w-[54px]`} />
        <span className={`${cell} w-[53px]`} />
        <span className={`${cell} w-[179px] pl-[3px]`}>Section Level 4125.00</span>
        <span className="flex w-[243px] items-center pl-[3px]">mso mineable-shape-optimizer&nbsp; Cursor: &lt;none&gt;</span>
        <span className={`${cell} w-[79px] pl-[3px]`}>SNAP: POINTS</span>
        <span className={`${cell} w-[54px] overflow-hidden pl-[3px] text-[#8494a6]`}>COMMAND</span>
      </div>
    </footer>
  );
}

export default function App() {
  return (
    <div className="flex h-screen flex-col overflow-hidden bg-black pt-4 pb-[17px]">
      <TitleBar />
      <Ribbon />
      <ViewToolbar />
      <main className="flex min-h-0 flex-1 bg-[#bad0e4]">
        <MsoPanel />
        <div className="ml-[7px] flex min-w-0 flex-1 flex-col">
          <div className="flex min-h-0 flex-1 gap-[3px] pb-[5px]">
            <SheetsPanel />
            <ViewPanel />
          </div>
          <CommandPanel />
        </div>
        <div className="ml-1 flex"><QuickFilter /></div>
      </main>
      <CommandBar />
      <StatusBar />
    </div>
  );
}
